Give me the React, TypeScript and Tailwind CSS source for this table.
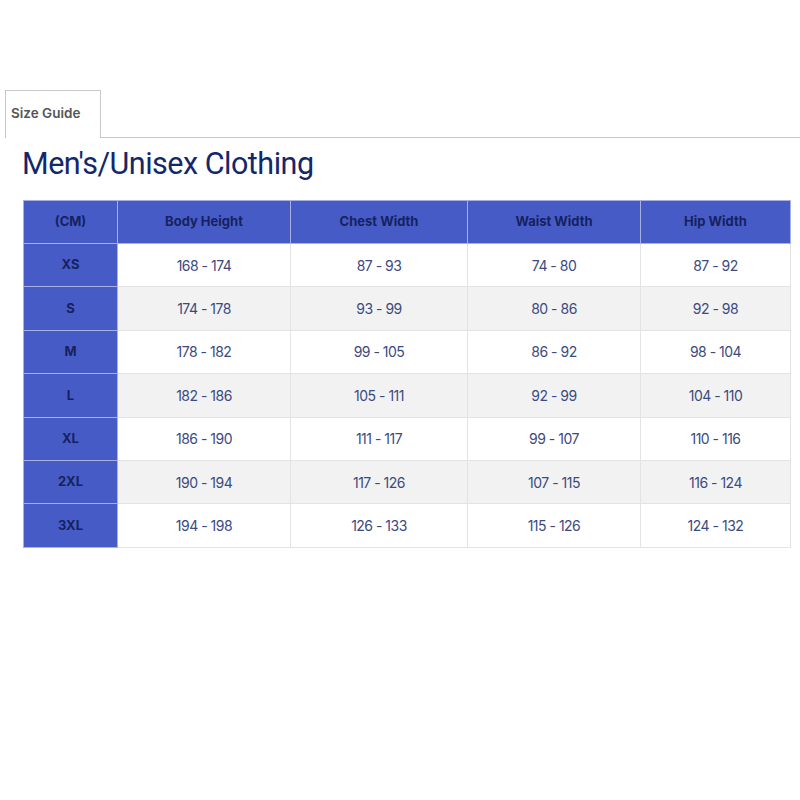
import React from 'react';

const COLUMNS = ['(CM)', 'Body Height', 'Chest Width', 'Waist Width', 'Hip Width'];

const ROWS = [
  { size: 'XS', values: ['168 - 174', '87 - 93', '74 - 80', '87 - 92'] },
  { size: 'S', values: ['174 - 178', '93 - 99', '80 - 86', '92 - 98'] },
  { size: 'M', values: ['178 - 182', '99 - 105', '86 - 92', '98 - 104'] },
  { size: 'L', values: ['182 - 186', '105 - 111', '92 - 99', '104 - 110'] },
  { size: 'XL', values: ['186 - 190', '111 - 117', '99 - 107', '110 - 116'] },
  { size: '2XL', values: ['190 - 194', '117 - 126', '107 - 115', '116 - 124'] },
  { size: '3XL', values: ['194 - 198', '126 - 133', '115 - 126', '124 - 132'] },
];

const WIDTHS = ['w-[94px]', 'w-[173px]', 'w-[177px]', 'w-[173px]', 'w-[150px]'];

export default function App() {
  return (
    <div className="w-[800px] h-[800px] bg-white pt-[90px] font-['Inter','Roboto',sans-serif]">
      {/* タブ */}
      <div className="flex items-end">
        <div className="w-[5px] h-[47px]" />
        <div className="w-[96px] h-[48px] border border-b-0 border-[#c8c8c8] flex items-center pl-[5px] pb-[3px]">
          <span className="text-[13.5px] font-semibold text-[#555]">Size Guide</span>
        </div>
        <div className="flex-1 border-b border-[#c8c8c8]" />
      </div>

      <h1 className="ml-[22px] mt-[6px] text-[30.5px] leading-[40px] tracking-[-0.5px] text-[#13286b] font-['Roboto','Inter',sans-serif]">
        Men's/Unisex Clothing
      </h1>

      {/* サイズ表 */}
      <table className="ml-[23px] mt-[16px] border-collapse table-fixed w-[767px]">
        <thead>
          <tr className="h-[43px]">
            {COLUMNS.map((col, i) => (
              <th
                key={col}
                className={`${WIDTHS[i]} bg-[#475bc7] border border-[#a7b0e4] text-[13px] font-bold text-[#15225e] text-center`}
              >
                {col}
              </th>
            ))}
          </tr>
        </thead>
        <tbody>
          {ROWS.map((row, r) => (
            <tr key={row.size} className={`h-[43.4px] ${r % 2 === 1 ? 'bg-[#f2f2f2]' : 'bg-white'}`}>
              <td className="bg-[#475bc7] border border-[#a7b0e4] text-[13px] font-bold text-[#15225e] text-center">
                {row.size}
              </td>
              {row.values.map((v, i) => (
                <td key={i} className="border border-[#e3e3e3] text-[14px] text-[#3b4a80] text-center tracking-[-0.5px]">
                  {v}
                </td>
              ))}
            </tr>
          ))}
        </tbody>
      </table>
    </div>
  );
}
